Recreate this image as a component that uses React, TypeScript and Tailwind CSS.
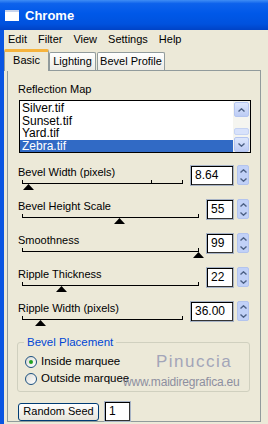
import React from 'react';

const items = ['Silver.tif', 'Sunset.tif', 'Yard.tif', 'Zebra.tif'];

type Row = { label: string; value: string; pos: number; wide: boolean; ticks: number[] };

const rows: Row[] = [
  { label: 'Bevel Width (pixels)', value: '8.64', pos: 0.04, wide: true, ticks: [0, 0.807, 1] },
  { label: 'Bevel Height Scale', value: '55', pos: 0.55, wide: false, ticks: [0, 1] },
  { label: 'Smoothness', value: '99', pos: 0.995, wide: false, ticks: [0, 1] },
  { label: 'Ripple Thickness', value: '22', pos: 0.22, wide: false, ticks: [0, 1] },
  { label: 'Ripple Width (pixels)', value: '36.00', pos: 0.11, wide: true, ticks: [0, 1] },
];

const Chevron = ({ up }: { up?: boolean }) => (
  <svg width="7" height="4" viewBox="0 0 7 4">
    <path d={up ? 'M0.5 3.5 L3.5 0.8 L6.5 3.5' : 'M0.5 0.5 L3.5 3.2 L6.5 0.5'} fill="none" stroke="#4d6185" strokeWidth="1.4" />
  </svg>
);

const Spinner = () => (
  <div className="ml-[3px] w-[12px] h-[20px] flex flex-col rounded-[2px] bg-[#c1d1f7] border border-[#b3c4ee]">
    <div className="flex-1 flex items-center justify-center">
      <Chevron up />
    </div>
    <div className="flex-1 flex items-center justify-center">
      <Chevron />
    </div>
  </div>
);

const Slider = ({ pos, ticks }: { pos: number; ticks: number[] }) => (
  <div className="relative h-[10px] mt-[1px] ml-[4px] mr-[7px]">
    <div className="absolute left-0 right-0 top-[3px] h-px bg-black" />
    {ticks.map((t, i) => (
      <div key={i} className="absolute top-0 h-[3px] w-px bg-black" style={{ left: `calc(${t * 100}% - ${t}px)` }} />
    ))}
    <svg
      className="absolute top-[4px]"
      width="11"
      height="6"
      viewBox="0 0 11 6"
      style={{ left: `calc(${pos * 100}% - 5px)` }}
    >
      <polygon points="5.5,0 11,6 0,6" fill="#000" />
    </svg>
  </div>
);

const ScrollBtn = ({ up }: { up?: boolean }) => (
  <div className="w-[15px] h-[15px] rounded-[2px] border border-[#b4c5f0] bg-gradient-to-b from-[#dde7fd] to-[#bccbf4] flex items-center justify-center">
    <Chevron up={up} />
  </div>
);

export default function App() {
  return (
    <div className="w-[268px] h-[424px] overflow-hidden bg-[#ece9d8] font-['Liberation_Sans',Arial,sans-serif] text-[11px] text-black flex flex-col">
      {/* title bar */}
      <div className="h-[30px] shrink-0 flex items-center bg-[linear-gradient(to_bottom,#3f8df5_0%,#0d62ec_12%,#0058e8_45%,#0052de_80%,#0043c6_100%)]">
        <svg className="ml-[5px]" width="14" height="11" viewBox="0 0 14 11">
          <rect x="0" y="0" width="14" height="11" fill="#ffffff" />
          <rect x="0" y="0" width="14" height="2" fill="#c8d4ec" />
        </svg>
        <span className="ml-[6px] text-white font-bold text-[13px] leading-none">Chrome</span>
      </div>

      <div className="flex flex-1 min-h-0">
        <div className="w-[4px] shrink-0 bg-[#0a55e2]" />
        <div className="flex-1 flex flex-col min-w-0">
          {/* menu */}
          <div className="h-[18px] flex items-center pl-[4px] gap-[11px] leading-none">
            <span>Edit</span>
            <span>Filter</span>
            <span>View</span>
            <span>Settings</span>
            <span>Help</span>
          </div>

          {/* tabs */}
          <div className="mt-[1px] h-[21px] flex items-end relative z-10">
            <div className="w-[45px] h-[22px] -mb-px bg-[#ece9d8] border-x border-[#919b9c] rounded-t-[2px] border-t-[3px] border-t-[#f6b33c] flex items-center justify-center pb-[2px]">
              Basic
            </div>
            <div className="w-[47px] h-[18px] bg-gradient-to-b from-white to-[#ecebe5] border border-b-0 border-[#919b9c] rounded-t-[2px] flex items-center justify-center">
              Lighting
            </div>
            <div className="ml-[1px] w-[68px] h-[18px] bg-gradient-to-b from-white to-[#ecebe5] border border-b-0 border-[#919b9c] rounded-t-[2px] flex items-center justify-center">
              Bevel Profile
            </div>
          </div>

          {/* tab page */}
          <div className="ml-[3px] w-[254px] h-[352px] shrink-0 border border-[#919b9c] bg-[#ece9d8] pl-[10px] pr-[9px] flex flex-col">
            <div className="mt-[11px] h-[14px] leading-[14px]">Reflection Map</div>

            <div className="mt-[4px] ml-[1px] h-[53px] border border-black bg-white flex text-[12px]">
              <div className="flex-1 flex flex-col pt-[1px]">
                {items.map((it, i) => (
                  <div
                    key={it}
                    className={`h-[12.5px] leading-[12.5px] pl-[2px] ${i === 3 ? 'bg-[#316ac5] text-white' : ''}`}
                  >
                    {it}
                  </div>
                ))}
              </div>
              <div className="w-[17px] bg-[#f5f5f0] flex flex-col items-center pt-[1px]">
                <ScrollBtn up />
                <div className="flex-1 flex flex-col justify-end pb-[2px]">
                  <div className="w-[15px] h-[7px] rounded-[2px] border border-[#c5d3f3] bg-[#d8e2fb]" />
                </div>
                <ScrollBtn />
              </div>
            </div>

            <div className="mt-[12px] mr-[2px] flex flex-col">
              {rows.map((r) => (
                <div key={r.label} className="h-[34px] flex items-start">
                  <div className="flex-1 min-w-0">
                    <div className="h-[14px] leading-[14px]">{r.label}</div>
                    <Slider pos={r.pos} ticks={r.ticks} />
                  </div>
                  <div
                    className={`${r.wide ? 'w-[44px]' : 'w-[28px]'} h-[21px] border border-[#a7b3c6] shadow-[inset_1px_1px_0_#000,inset_-1px_-1px_0_#333] bg-white text-[12px] leading-[19px] pl-[4px]`}
                  >
                    {r.value}
                  </div>
                  <Spinner />
                </div>
              ))}
            </div>

            <fieldset className="relative -ml-[1px] mr-[1px] border border-[#d0d0bf] rounded-[3px] pl-[6px] pb-[4px]">
              <legend className="px-[3px] h-[14px] leading-[14px] text-[#0046d5] text-[11.5px]">Bevel Placement</legend>
              <div className="mt-[4px] flex flex-col">
                {['Inside marquee', 'Outside marquee'].map((t, i) => (
                  <div key={t} className="h-[17px] flex items-center text-[11.5px]">
                    <div className="ml-[1px] w-[12px] h-[12px] rounded-full border border-[#1c5180] bg-gradient-to-br from-[#dcdcd6] to-white flex items-center justify-center">
                      {i === 0 && <div className="w-[4px] h-[4px] rounded-full bg-[#21a121]" />}
                    </div>
                    <span className="ml-[4px]">{t}</span>
                  </div>
                ))}
              </div>
              <div className="absolute left-[138px] top-[4px] text-[17px] tracking-[1.5px] text-[#a3a5b8] leading-none">
                Pinuccia
              </div>
              <div className="absolute left-[105px] top-[27px] text-[12px] text-[#8d8fa0] leading-none tracking-[-0.2px]">
                www.maidiregrafica.eu
              </div>
            </fieldset>

            <div className="mt-[9px] flex items-center">
              <div className="w-[81px] h-[18px] rounded-[3px] border border-[#003c74] bg-gradient-to-b from-white to-[#e6e4da] flex items-center justify-center text-[11px]">
                Random Seed
              </div>
              <div className="ml-[5px] w-[27px] h-[21px] border border-[#a7b3c6] shadow-[inset_1px_1px_0_#000,inset_-1px_-1px_0_#333] bg-white text-[12px] leading-[19px] pl-[4px]">
                1
              </div>
            </div>
          </div>
        </div>
      </div>
    </div>
  );
}
